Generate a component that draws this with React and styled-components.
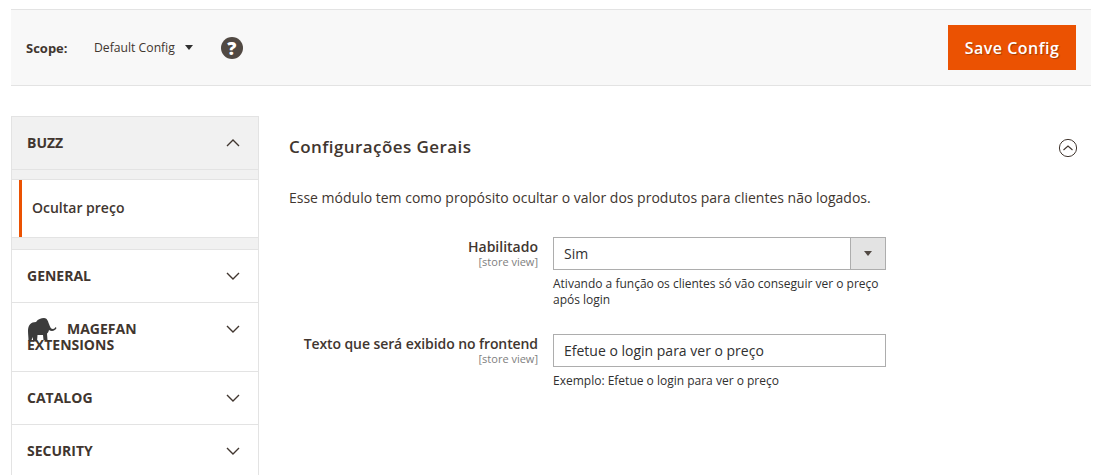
import React from "react";
import styled, { createGlobalStyle } from "styled-components";

const Global = createGlobalStyle`
  html, body { margin: 0; padding: 0; background: #fff; height: 475px; overflow: hidden; }
  body { font-family: "Open Sans", sans-serif; color: #41362f; font-size: 14px; }
  * { box-sizing: border-box; }
`;

const Page = styled.div`
  width: 1099px;
  height: 475px;
  overflow: hidden;
  padding: 9px 8px 0 11px;
`;

const Toolbar = styled.div`
  height: 77px;
  background: #f8f8f8;
  border-top: 1px solid #e3e3e3;
  border-bottom: 1px solid #e3e3e3;
  display: flex;
  align-items: center;
  padding: 0 15px;
`;

const ScopeLabel = styled.span`
  font-size: 13px;
  font-weight: 700;
  color: #41362f;
  width: 68px;
`;

const ScopeValue = styled.span`
  font-size: 12.2px;
  color: #41362f;
  display: flex;
  align-items: center;
`;

const Caret = styled.span`
  margin-left: 10px;
  width: 0;
  height: 0;
  border-left: 4px solid transparent;
  border-right: 4px solid transparent;
  border-top: 5px solid #303030;
`;

const Help = styled.span`
  margin-left: 28px;
  width: 22px;
  height: 22px;
  border-radius: 50%;
  background: #514943;
  color: #fff;
  font-size: 18px;
  font-weight: 800;
  display: flex;
  align-items: center;
  justify-content: center;
  line-height: 1;
`;

const SaveButton = styled.button`
  margin-left: auto;
  width: 128px;
  height: 45px;
  background: #eb5202;
  border: 0;
  color: #fff;
  font-family: "Open Sans", sans-serif;
  font-size: 16px;
  font-weight: 600;
  letter-spacing: 0.5px;
  text-shadow: 1px 1px 1px rgba(0, 0, 0, 0.3);
  padding: 0;
`;

const Columns = styled.div`
  display: flex;
  margin-top: 30px;
`;

const Sidebar = styled.nav`
  width: 248px;
  flex: none;
  border-left: 1px solid #e3e3e3;
  border-right: 1px solid #e3e3e3;
  border-top: 1px solid #e3e3e3;
`;

const TabHeader = styled.div`
  display: flex;
  justify-content: space-between;
  align-items: ${(p) => (p.$tall ? "flex-start" : "center")};
  height: ${(p) => p.$height}px;
  padding: ${(p) => (p.$tall ? "18px" : "0")} 18px 0 15px;
  background: ${(p) => (p.$open ? "#f1f1f1" : "#fff")};
  border-bottom: 1px solid #e3e3e3;
`;

const TabTitle = styled.div`
  font-size: 14px;
  font-weight: 700;
  line-height: 16px;
  color: #41362f;
  text-transform: uppercase;
  width: 170px;
`;

const Logo = styled.svg`
  width: 30px;
  height: 25px;
  margin: -15px 10px -6px 0;
  vertical-align: -2px;
`;

const Chevron = styled.svg`
  width: 14px;
  height: 14px;
  flex: none;
  margin-top: ${(p) => (p.$nudge ? "1px" : "0")};
`;

const Strip = styled.div`
  height: ${(p) => p.$h}px;
  background: #f1f1f1;
  border-bottom: ${(p) => (p.$line ? "1px solid #e3e3e3" : "0")};
  border-top: ${(p) => (p.$top ? "1px solid #e3e3e3" : "0")};
`;

const SubItem = styled.div`
  height: 57px;
  margin-left: 7px;
  border-left: 3px solid #eb5202;
  padding: 0 0 2px 10px;
  display: flex;
  align-items: center;
  font-size: 14px;
  font-weight: 600;
  color: #41362f;
`;

const Content = styled.main`
  flex: 1;
  padding: 19px 13px 0 30px;
  min-width: 0;
`;

const SectionHead = styled.div`
  display: flex;
  justify-content: space-between;
  align-items: center;
  height: 24px;
`;

const SectionTitle = styled.h2`
  margin: -2px 0 0;
  font-size: 17px;
  font-weight: 600;
  letter-spacing: 0.425px;
  color: #41362f;
`;

const CollapseIcon = styled.svg`
  width: 20px;
  height: 20px;
  margin: 1px 0 0;
`;

const Description = styled.p`
  margin: 29px 0 0;
  font-size: 14px;
  line-height: 20px;
  color: #41362f;
`;

const FormRow = styled.div`
  display: grid;
  grid-template-columns: 249px 333px;
  column-gap: 15px;
  margin-top: ${(p) => p.$mt}px;
`;

const LabelCol = styled.div`
  text-align: right;
  padding-top: 1px;
`;

const FieldLabel = styled.div`
  font-size: 14px;
  font-weight: 600;
  line-height: 17px;
  color: #41362f;
  letter-spacing: ${(p) => (p.$tight ? "-0.09px" : "0")};
`;

const Scope = styled.div`
  font-size: 11px;
  line-height: 13px;
  color: #808080;
`;

const Select = styled.div`
  height: 33px;
  border: 1px solid #adadad;
  display: flex;
  align-items: center;
  font-size: 14px;
  color: #303030;
  padding-left: 10px;
  justify-content: space-between;
  background: #fff;
`;

const SelectArrow = styled.span`
  width: 35px;
  height: 31px;
  background: #e3e3e3;
  border-left: 1px solid #adadad;
  display: flex;
  align-items: center;
  justify-content: center;
  &::after {
    content: "";
    border-left: 4px solid transparent;
    border-right: 4px solid transparent;
    border-top: 5px solid #514943;
  }
`;

const TextField = styled.div`
  height: 33px;
  border: 1px solid #adadad;
  display: flex;
  align-items: center;
  font-size: 14px;
  color: #303030;
  padding-left: 10px;
  background: #fff;
`;

const Note = styled.div`
  font-size: 12px;
  line-height: 15.5px;
  color: #303030;
  margin-top: 6px;
`;

const ChevronIcon = ({ up, nudge }) => (
  <Chevron viewBox="0 0 14 14" $nudge={nudge}>
    <path
      d={up ? "M1 10 L7 4 L13 10" : "M1 4 L7 10 L13 4"}
      fill="none"
      stroke="#41362f"
      strokeWidth="1.4"
    />
  </Chevron>
);

const Elephant = () => (
  <Logo viewBox="0 0 30 25">
    <path
      d="M1 14 C1 8 4 5 9 5 C11 2 14 1 17 1 C20 1 21 4 22 7 C23 10 24 12 26 12 C27 12 28 11 28.500 10 L29.500 11 C28.500 13.500 25 15 22 13 C21.500 15 21 16 20 16.500 L20.500 23 L16.500 23 L16 18 L10.500 18 L10 24.500 L6 24.500 L6 20 L4 24 L1.500 24 C1.500 20 1 17 1 14 Z"
      fill="#3c3c3c"
    />
  </Logo>
);

const tabs = [
  { name: "General", h: 53 },
  { name: "Catalog", h: 53 },
  { name: "Security", h: 53 },
];

export default function App() {
  return (
    <Page>
      <Global />
      <Toolbar>
        <ScopeLabel>Scope:</ScopeLabel>
        <ScopeValue>
          Default Config
          <Caret />
        </ScopeValue>
        <Help>?</Help>
        <SaveButton>Save Config</SaveButton>
      </Toolbar>
      <Columns>
        <Sidebar>
          <TabHeader $open $height={53}>
            <TabTitle>Buzz</TabTitle>
            <ChevronIcon up />
          </TabHeader>
          <Strip $h={10} $line />
          <SubItem>Ocultar preço</SubItem>
          <Strip $h={13} $top $line />
          <TabHeader $height={53}>
            <TabTitle>{tabs[0].name}</TabTitle>
            <ChevronIcon />
          </TabHeader>
          <TabHeader $height={69} $tall>
            <TabTitle>
              <Elephant />
              Magefan Extensions
            </TabTitle>
            <ChevronIcon nudge />
          </TabHeader>
          {tabs.slice(1).map((t) => (
            <TabHeader key={t.name} $height={t.h}>
              <TabTitle>{t.name}</TabTitle>
              <ChevronIcon />
            </TabHeader>
          ))}
        </Sidebar>
        <Content>
          <SectionHead>
            <SectionTitle>Configurações Gerais</SectionTitle>
            <CollapseIcon viewBox="0 0 20 20">
              <circle cx="10" cy="10" r="8.6" fill="none" stroke="#41362f" strokeWidth="1" />
              <path d="M5.5 12 L10 8 L14.500 12" fill="none" stroke="#41362f" strokeWidth="1.1" />
            </CollapseIcon>
          </SectionHead>
          <Description>
            Esse módulo tem como propósito ocultar o valor dos produtos para clientes não logados.
          </Description>
          <FormRow $mt={29}>
            <LabelCol>
              <FieldLabel>Habilitado</FieldLabel>
              <Scope>[store view]</Scope>
            </LabelCol>
            <div>
              <Select>
                Sim
                <SelectArrow />
              </Select>
              <Note>Ativando a função os clientes só vão conseguir ver o preço após login</Note>
            </div>
          </FormRow>
          <FormRow $mt={27}>
            <LabelCol>
              <FieldLabel $tight>Texto que será exibido no frontend</FieldLabel>
              <Scope>[store view]</Scope>
            </LabelCol>
            <div>
              <TextField>Efetue o login para ver o preço</TextField>
              <Note>Exemplo: Efetue o login para ver o preço</Note>
            </div>
          </FormRow>
        </Content>
      </Columns>
    </Page>
  );
}
